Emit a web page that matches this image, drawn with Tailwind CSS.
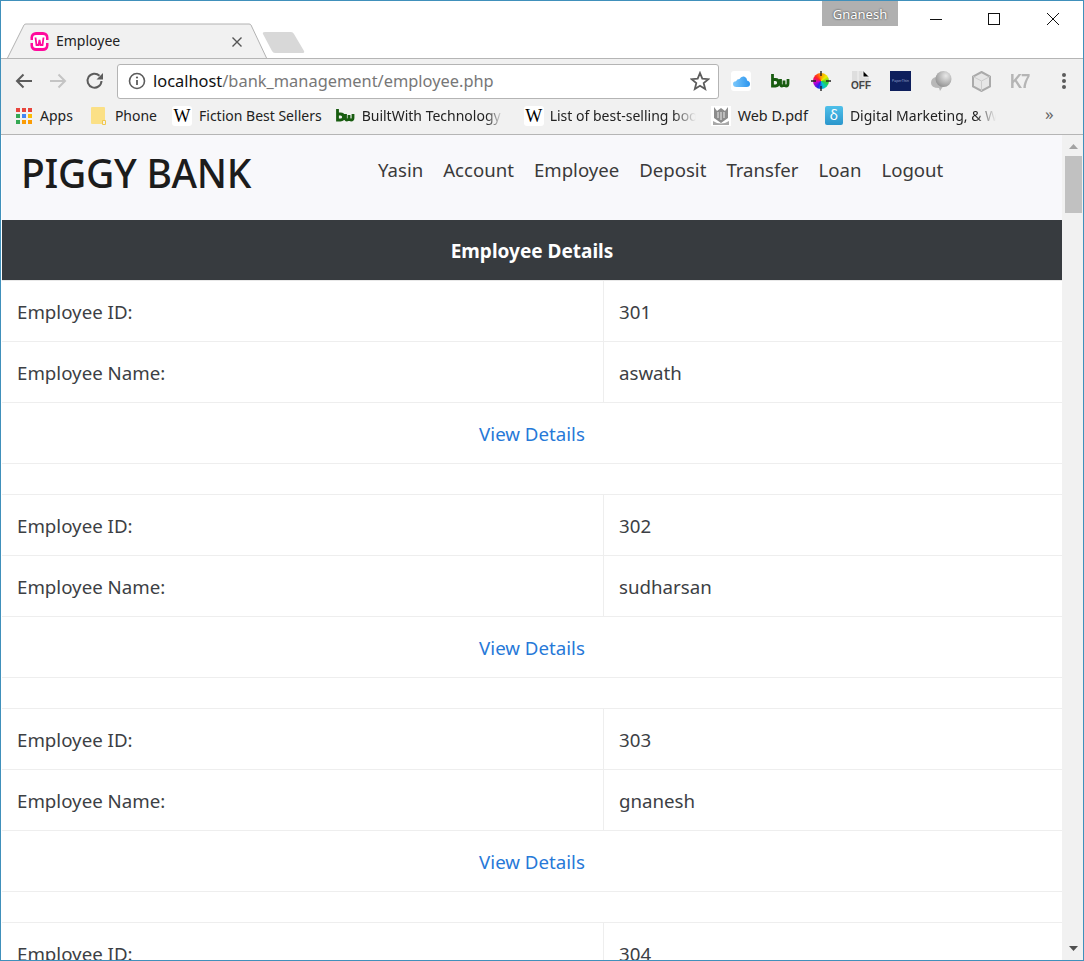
<!DOCTYPE html>
<html lang="en">
<head>
  <meta charset="UTF-8">
  <title>Employee</title>
  <script src="https://cdn.jsdelivr.net/npm/@tailwindcss/browser@4"></script>
</head>
<body class="bg-white overflow-hidden">
<div class="w-[1084px] h-[961px] border border-[#4090bb] flex flex-col overflow-hidden font-['Noto_Sans',sans-serif] text-[#212529]">

  <!-- title bar -->
  <div class="relative h-[57px] shrink-0 bg-white">
    <svg class="absolute left-0 top-0" width="320" height="58" viewBox="0 0 320 58">
      <path d="M6 58 L23 24 Q23.500 23 25 23 L248 23 Q249.500 23 250 24 L266 58 Z" fill="#f1f1f1" stroke="#b2b2b2"/>
      <path d="M262 33 Q261 31 264 31 L290 31 Q292 31 293 33 L303 50 Q304 52 301 52 L274 52 Q272 52 271 50 Z" fill="#d8d8d8"/>
    </svg>
    <svg class="absolute left-[29px] top-[31px]" width="19" height="19" viewBox="0 0 19 19">
      <rect x="0.500" y="0" width="18" height="19" rx="5.500" fill="#ff0a9c"/>
      <rect x="3" y="3" width="13" height="13" rx="3" fill="#fff"/>
      <path d="M0 8 H3 V11 H0 Z M16 8 H19 V11 H16 Z" fill="#f1f1f1"/>
      <path d="M5.500 5.500 L6.500 13 H8.500 L9.500 8 L10.500 13 H12.500 L13.500 5.500" fill="none" stroke="#ff0a9c" stroke-width="1.800"/>
    </svg>
    <span class="absolute left-[55px] top-[30px] text-[14px] leading-[19px] text-[#222]">Employee</span>
    <svg class="absolute left-[231px] top-[36px]" width="10" height="10" viewBox="0 0 10 10"><path d="M0.500 0.500 L9.500 9.500 M9.500 0.500 L0.500 9.500" stroke="#555" stroke-width="1.400"/></svg>
    <div class="absolute left-[821px] top-0 w-[76px] h-[25px] bg-[#b0b0b0] text-white text-[13px] leading-[26px] text-center [text-shadow:0_0_2px_#222]">Gnanesh</div>
    <svg class="absolute left-[929px] top-[18px]" width="12" height="2"><path d="M0 0.500 H12" stroke="#111"/></svg>
    <svg class="absolute left-[987px] top-[12px]" width="12" height="12"><rect x="0.500" y="0.500" width="11" height="11" fill="none" stroke="#111"/></svg>
    <svg class="absolute left-[1046px] top-[12px]" width="12" height="12"><path d="M0 0 L12 12 M12 0 L0 12" stroke="#111"/></svg>
  </div>

  <!-- toolbar -->
  <div class="h-[41px] shrink-0 pt-[4px] bg-[#f1f1f1] border-t border-[#b5b5b5] flex items-center relative z-10">
    <svg class="ml-[14px]" width="18" height="18" viewBox="0 0 18 18"><path d="M17 9 H2 M8.500 2.500 L2 9 L8.500 15.500" fill="none" stroke="#5c5c5c" stroke-width="2"/></svg>
    <svg class="ml-[16px]" width="18" height="18" viewBox="0 0 18 18"><path d="M1 9 H16 M9.500 2.500 L16 9 L9.500 15.500" fill="none" stroke="#c4c4c4" stroke-width="2"/></svg>
    <svg class="ml-[18px]" width="20" height="20" viewBox="0 0 20 20"><path d="M16.500 10 A7 7 0 1 1 14.500 4.800" fill="none" stroke="#5c5c5c" stroke-width="2"/><path d="M11.500 8.500 H18 V2 Z" fill="#5c5c5c"/></svg>
    <div class="ml-[12px] w-[602px] h-[35px] bg-white border border-[#b4b4b4] rounded-[3px] flex items-center">
      <svg class="ml-[10px]" width="18" height="18" viewBox="0 0 18 18"><circle cx="9" cy="9" r="7.500" fill="none" stroke="#5c5c5c" stroke-width="1.600"/><path d="M9 8 V13" stroke="#5c5c5c" stroke-width="1.800"/><circle cx="9" cy="5.500" r="1.100" fill="#5c5c5c"/></svg>
      <span class="ml-[7px] text-[16.400px] leading-[24px] text-[#111] whitespace-nowrap">localhost<span class="text-[#777]">/bank_management/employee.php</span></span>
      <svg class="ml-auto mr-[8px]" width="20" height="20" viewBox="0 0 20 20"><path d="M10 2 L12.300 7.700 L18.400 8.200 L13.700 12.100 L15.200 18 L10 14.800 L4.800 18 L6.300 12.100 L1.600 8.200 L7.700 7.700 Z" fill="none" stroke="#5c5c5c" stroke-width="1.800"/></svg>
    </div>
    <!-- extension icons -->
    <div class="ml-[12px] flex items-center gap-[20px]">
      <div class="w-[20px] h-[20px] bg-white rounded-[3px] flex items-center justify-center">
        <svg width="17" height="11" viewBox="0 0 17 11">
          <defs><linearGradient id="cloud" x1="0" y1="0" x2="1" y2="0"><stop offset="0" stop-color="#7cc8fb"/><stop offset="1" stop-color="#2a94ee"/></linearGradient></defs>
          <path d="M3.500 11 Q0 11 0 8 Q0 5.500 3 5.300 Q4 3 6.500 3 Q8 0 11 0.500 Q14 1.500 14 4.500 Q17 5 17 8 Q17 11 13.500 11 Z" fill="url(#cloud)"/>
        </svg>
      </div>
      <svg width="20" height="14" viewBox="0 0 20 14"><path d="M1.500 0 V12 H4.500 Q7.500 12 7.500 8.800 Q7.500 5.500 4.500 5.500 H1.500 M9.500 5 V9.500 Q9.500 12 11 12 Q12.500 12 13 10 V6.500 M13 10 Q13.500 12 15 12 Q17 12 17 9.500 V5" fill="none" stroke="#185c10" stroke-width="2.800"/></svg>
      <div class="relative w-[20px] h-[20px]">
        <div class="absolute inset-[2px] rounded-full bg-[conic-gradient(#f90,#ee0,#3c3,#0cc,#22e,#c0c,#f22,#f90)]"></div>
        <svg class="absolute inset-0" width="20" height="20" viewBox="0 0 20 20"><path d="M10 0 V5 M10 15 V20 M0 10 H5 M15 10 H20" stroke="#222" stroke-width="1.400"/></svg>
      </div>
      <div class="relative w-[20px] h-[20px]">
        <svg class="absolute left-[1px] top-0" width="17" height="14" viewBox="0 0 17 14"><path d="M0 0 H11 L17 6 V14 H0 Z" fill="#dedede"/><path d="M6 0 V14 M11 0 V6 H17" stroke="#f3f3f3"/></svg>
        <span class="absolute left-0 top-[9px] text-[10px] leading-[11px] font-bold text-[#444] font-['Liberation_Sans',sans-serif]">OFF</span>
      </div>
      <div class="w-[21px] h-[20px] bg-[#0e1f5c] flex items-center justify-center text-[3.500px] text-[#9aa5d0] -ml-px">PaperThin</div>
      <svg width="21" height="20" viewBox="0 0 21 20">
        <defs><radialGradient id="orb" cx="0.650" cy="0.300" r="0.800"><stop offset="0" stop-color="#e8e8e8"/><stop offset="1" stop-color="#8c8c8c"/></radialGradient></defs>
        <path d="M0 12 Q0 7 5 6 L13 14 L9 20 L8 17 Q0 17 0 12 Z" fill="#b8b8b8"/>
        <circle cx="12.500" cy="8" r="8" fill="url(#orb)"/>
      </svg>
      <svg class="-ml-px" width="21" height="21" viewBox="0 0 21 21"><path d="M10.500 1 L19 5.500 V15.500 L10.500 20 L2 15.500 V5.500 Z" fill="#e6e6e6" stroke="#aaaaaa" stroke-width="2"/><path d="M2 5.500 L10.500 10 L19 5.500 M10.500 10 V20" fill="none" stroke="#cccccc"/></svg>
      <span class="w-[20px] -ml-[2px] origin-left scale-x-[0.8] text-[21px] leading-[20px] font-bold tracking-[-1.500px] text-[#b5b5b5] font-['Liberation_Sans',sans-serif]">K7</span>
    </div>
    <svg class="ml-[32px]" width="4" height="16" viewBox="0 0 4 16"><circle cx="2" cy="2" r="2" fill="#5c5c5c"/><circle cx="2" cy="8" r="2" fill="#5c5c5c"/><circle cx="2" cy="14" r="2" fill="#5c5c5c"/></svg>
  </div>

  <!-- bookmarks -->
  <div class="h-[36px] shrink-0 pb-[2px] bg-[#f1f1f1] border-b border-[#b5b5b5] flex items-center text-[14px] text-[#222] whitespace-nowrap relative">
    <div class="ml-[15px] grid grid-cols-3 gap-[2px] w-[16px]">
      <i class="h-[4px] bg-[#e8453c]"></i><i class="h-[4px] bg-[#e8453c]"></i><i class="h-[4px] bg-[#e8453c]"></i>
      <i class="h-[4px] bg-[#34a853]"></i><i class="h-[4px] bg-[#4285f4]"></i><i class="h-[4px] bg-[#fbbc05]"></i>
      <i class="h-[4px] bg-[#34a853]"></i><i class="h-[4px] bg-[#fb9c05]"></i><i class="h-[4px] bg-[#fb9c05]"></i>
    </div>
    <span class="ml-[8px]">Apps</span>
    <svg class="ml-[18px]" width="15" height="18" viewBox="0 0 15 18"><path d="M0 1 Q0 0 1 0 H13 Q14 0 14 1 V13 H12 V17 H1 Q0 17 0 16 Z" fill="#fbe086"/><path d="M11.500 13.500 H14.500 V17.500 H11.500 Z" fill="none" stroke="#f0c850"/></svg>
    <span class="ml-[9px]">Phone</span>
    <span class="ml-[15px] w-[20px] h-[20px] bg-white rounded-[3px] text-center text-[18px] leading-[20px] font-['Liberation_Serif',serif] text-black">W</span>
    <span class="ml-[7px]">Fiction Best Sellers</span>
    <svg class="ml-[14px]" width="20" height="13" viewBox="0 0 20 13"><path d="M1.500 0 V11 H4.500 Q7.500 11 7.500 8 Q7.500 5 4.500 5 H1.500 M9.500 5 V9 Q9.500 11 11 11 Q12.500 11 13 9 V6 M13 9 Q13.500 11 15 11 Q17 11 17 9 V5" fill="none" stroke="#185c10" stroke-width="2.800"/></svg>
    <span class="ml-[6px] w-[141px] [mask-image:linear-gradient(to_right,black_88%,transparent)]">BuiltWith Technology</span>
    <span class="ml-[21px] w-[20px] h-[20px] bg-white rounded-[3px] text-center text-[18px] leading-[20px] font-['Liberation_Serif',serif] text-black">W</span>
    <span class="ml-[6px] w-[146px] [mask-image:linear-gradient(to_right,black_84%,transparent)]">List of best-selling boo</span>
    <svg class="ml-[15px]" width="20" height="20" viewBox="0 0 20 20"><rect width="20" height="20" fill="#fff"/><path d="M3 1 L6 5 L10 2 L14 5 L17 1 V12 L10 17 L3 12 Z" fill="#8c8c8c"/><path d="M7 6 V12 M10 6 V14 M13 6 V12" stroke="#ddd" stroke-width="1.200"/><path d="M2 15 Q10 20 18 15 V19 H2 Z" fill="#a8a8a8"/></svg>
    <span class="ml-[7px] text-[14.400px]">Web D.pdf</span>
    <div class="ml-[17px] w-[18px] h-[19px] bg-gradient-to-b from-[#4fc0ea] to-[#2a96cc] rounded-[2px] text-white text-[14px] leading-[18px] text-center">δ</div>
    <span class="ml-[7px] w-[146px] [mask-image:linear-gradient(to_right,black_86%,transparent)]">Digital Marketing, &amp; W</span>
    <span class="absolute left-[1044px] top-[4px] text-[#666] text-[17px] leading-[22px]">»</span>
  </div>

  <!-- page -->
  <div class="flex-1 flex min-h-0 pl-px">
    <main class="w-[1060px] shrink-0 text-[#3c4044] text-[18.700px]">
      <nav class="h-[85px] bg-[#f8f8fb] relative">
        <span class="absolute left-[19px] top-[12px] text-[39px] leading-[52px] font-medium text-[#1c1c1c] tracking-[-0.300px]">PIGGY BANK</span>
        <ul class="pl-[376px] pt-[22px] flex gap-[20px] text-[18.600px] leading-[26px] text-[#3a3a3a]">
          <li>Yasin</li><li>Account</li><li>Employee</li><li>Deposit</li><li>Transfer</li><li>Loan</li><li>Logout</li>
        </ul>
      </nav>
      <h2 class="h-[61px] bg-[#373b3f] border-b border-[#e8e8e8] text-white text-[19px] leading-[62px] font-bold text-center">Employee Details</h2>

      <section>
        <div class="grid grid-cols-[602px_1fr] h-[61px] border-b border-[#eeeeee]"><div class="pl-[15px] pt-[2px] leading-[58px] border-r border-[#eeeeee]">Employee ID:</div><div class="pl-[15px] pt-[2px] leading-[58px]">301</div></div>
        <div class="grid grid-cols-[602px_1fr] h-[61px] border-b border-[#eeeeee]"><div class="pl-[15px] pt-[2px] leading-[58px] border-r border-[#eeeeee]">Employee Name:</div><div class="pl-[15px] pt-[2px] leading-[58px]">aswath</div></div>
        <div class="h-[61px] pt-[2px] leading-[58px] border-b border-[#eeeeee] text-center text-[#2779d8]">View Details</div>
      </section>
      <div class="h-[31px] border-b border-[#eeeeee]"></div>

      <section>
        <div class="grid grid-cols-[602px_1fr] h-[61px] border-b border-[#eeeeee]"><div class="pl-[15px] pt-[2px] leading-[58px] border-r border-[#eeeeee]">Employee ID:</div><div class="pl-[15px] pt-[2px] leading-[58px]">302</div></div>
        <div class="grid grid-cols-[602px_1fr] h-[61px] border-b border-[#eeeeee]"><div class="pl-[15px] pt-[2px] leading-[58px] border-r border-[#eeeeee]">Employee Name:</div><div class="pl-[15px] pt-[2px] leading-[58px]">sudharsan</div></div>
        <div class="h-[61px] pt-[2px] leading-[58px] border-b border-[#eeeeee] text-center text-[#2779d8]">View Details</div>
      </section>
      <div class="h-[31px] border-b border-[#eeeeee]"></div>

      <section>
        <div class="grid grid-cols-[602px_1fr] h-[61px] border-b border-[#eeeeee]"><div class="pl-[15px] pt-[2px] leading-[58px] border-r border-[#eeeeee]">Employee ID:</div><div class="pl-[15px] pt-[2px] leading-[58px]">303</div></div>
        <div class="grid grid-cols-[602px_1fr] h-[61px] border-b border-[#eeeeee]"><div class="pl-[15px] pt-[2px] leading-[58px] border-r border-[#eeeeee]">Employee Name:</div><div class="pl-[15px] pt-[2px] leading-[58px]">gnanesh</div></div>
        <div class="h-[61px] pt-[2px] leading-[58px] border-b border-[#eeeeee] text-center text-[#2779d8]">View Details</div>
      </section>
      <div class="h-[31px] border-b border-[#eeeeee]"></div>

      <section>
        <div class="grid grid-cols-[602px_1fr] h-[61px]"><div class="pl-[15px] pt-[2px] leading-[58px] border-r border-[#eeeeee]">Employee ID:</div><div class="pl-[15px] pt-[2px] leading-[58px]">304</div></div>
      </section>
    </main>

    <!-- scrollbar -->
    <div class="flex-1 bg-[#f1f1f1] flex flex-col relative">
      <svg class="mt-[9px] ml-[7px]" width="9" height="5"><path d="M4.500 0 L9 5 H0 Z" fill="#a3a3a3"/></svg>
      <div class="mt-[7px] ml-[3px] w-[17px] h-[57px] bg-[#c1c1c1]"></div>
      <svg class="absolute bottom-[9px] left-[7px]" width="9" height="5"><path d="M0 0 H9 L4.500 5 Z" fill="#505050"/></svg>
    </div>
  </div>
</div>
</body>
</html>
